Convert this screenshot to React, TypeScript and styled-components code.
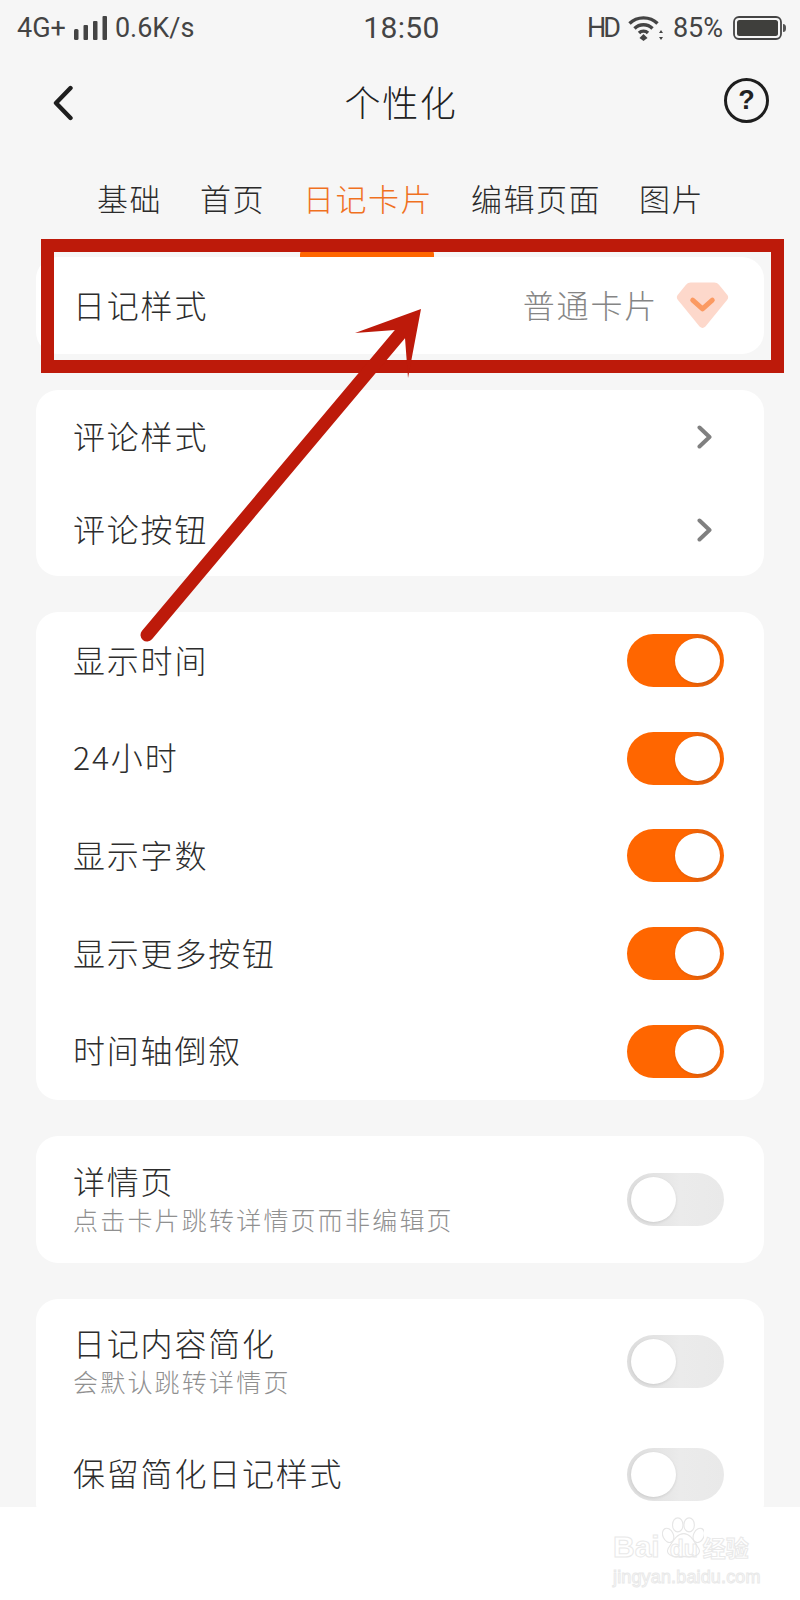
import React from 'react';
import styled, { createGlobalStyle } from 'styled-components';

const GlobalStyle = createGlobalStyle`
  html, body {
    margin: 0;
    padding: 0;
    background: #fff;
    font-family: "Noto Sans CJK SC", "Noto Sans", sans-serif;
  }
`;

const Screen = styled.div`
  position: relative;
  width: 800px;
  height: 1600px;
  overflow: hidden;
  background: #fff;
`;

const Viewport = styled.div`
  height: 1507px;
  overflow: hidden;
  background: #f6f6f6;
`;

const StatusBar = styled.div`
  height: 56px;
  padding: 0 14px 0 17px;
  display: grid;
  grid-template-columns: 1fr auto 1fr;
  align-items: center;
  color: #444;
  font-family: Roboto, "Liberation Sans", sans-serif;
`;

const StatusSide = styled.div<{ $end?: boolean }>`
  display: flex;
  align-items: center;
  justify-content: ${({ $end }) => ($end ? 'flex-end' : 'flex-start')};
`;

const StatusText = styled.span<{ $left?: number; $tight?: boolean }>`
  font-size: 27px;
  font-weight: 400;
  letter-spacing: ${({ $tight }) => ($tight ? '-3px' : '0')};
  margin-left: ${({ $left }) => $left ?? 0}px;
  line-height: 30px;
`;

const Clock = styled.span`
  font-size: 30px;
  letter-spacing: 0.4px;
  margin-bottom: 2px;
  color: #444;
`;

const NavBar = styled.div`
  height: 92px;
  padding: 0 31px 3px 52px;
  box-sizing: border-box;
  display: flex;
  align-items: center;
  justify-content: space-between;
`;

const BackIcon = styled.svg`
  margin-top: 4px;
`;

const NavTitle = styled.h1`
  margin: 0 0 0 4px;
  font-size: 36px;
  font-weight: 300;
  letter-spacing: 1.6px;
  color: #222;
`;

const HelpButton = styled.div`
  width: 45px;
  height: 45px;
  box-sizing: border-box;
  border: 3px solid #1e1e1e;
  border-radius: 50%;
  display: flex;
  align-items: center;
  justify-content: center;
  font: 700 27px "Liberation Sans", sans-serif;
  color: #222;
`;

const Tabs = styled.div`
  height: 109px;
  padding: 0 0 9px 97px;
  box-sizing: border-box;
  display: flex;
  align-items: center;
  gap: 38px;
`;

const Tab = styled.div<{ $active?: boolean }>`
  position: relative;
  font-size: 31px;
  font-weight: 300;
  line-height: 44px;
  letter-spacing: 1.5px;
  white-space: nowrap;
  color: ${({ $active }) => ($active ? '#f0711f' : '#2b2b2b')};
`;

const TabMark = styled.div`
  position: absolute;
  left: -3px;
  right: -1px;
  bottom: -37px;
  height: 8px;
  border-radius: 5px 5px 0 0;
  background: #ff6600;
`;

const Cards = styled.div`
  padding: 0 36px;
  display: flex;
  flex-direction: column;
  gap: 36px;
`;

const Card = styled.section<{ $height?: number }>`
  background: #fff;
  border-radius: 22px;
  ${({ $height }) => ($height ? `height: ${$height}px;` : '')}
  flex: none;
`;

const Row = styled.div<{ $height: number }>`
  height: ${({ $height }) => $height}px;
  padding: 0 40px 0 37px;
  display: flex;
  align-items: center;
  justify-content: space-between;
`;

const Label = styled.div`
  font-size: 32px;
  font-weight: 300;
  letter-spacing: 1.8px;
  line-height: 40px;
  color: #2d2d2d;
`;

const RowLabel = styled(Label)`
  margin-bottom: 4px;
`;

const Hint = styled.div`
  font-size: 25px;
  font-weight: 300;
  letter-spacing: 2.2px;
  line-height: 39px;
  color: #909090;
`;

const Value = styled.div`
  display: flex;
  align-items: center;
  gap: 18px;
  margin-right: -5px;
  font-size: 32px;
  font-weight: 300;
  letter-spacing: 1.8px;
  color: #858585;
`;

const ValueText = styled.span`
  margin-bottom: 4px;
`;

const ChevronIcon = styled.svg`
  margin-right: 11px;
`;

const Track = styled.div<{ $on?: boolean }>`
  width: 97px;
  height: 53px;
  padding: 4px;
  box-sizing: border-box;
  border-radius: 27px;
  display: flex;
  justify-content: ${({ $on }) => ($on ? 'flex-end' : 'flex-start')};
  background: ${({ $on }) =>
    $on
      ? 'linear-gradient(90deg, #ff6600 62%, #e0600f 82%, #ff6600 100%)'
      : 'linear-gradient(90deg, #dedede 8%, #ebebeb 55%, #e9e9e9 100%)'};
`;

const Knob = styled.div`
  width: 45px;
  height: 45px;
  border-radius: 50%;
  background: #fff;
  box-shadow: 0 1px 3px rgba(0, 0, 0, 0.1);
`;

const Callout = styled.div`
  position: absolute;
  left: 41px;
  top: 239px;
  width: 743px;
  height: 134px;
  box-sizing: border-box;
  border: 13px solid #bd1a0a;
`;

const Overlay = styled.svg`
  position: absolute;
  left: 0;
  top: 0;
`;

const Watermark = styled.div`
  position: absolute;
  left: 613px;
  top: 1515px;
  width: 145px;
  height: 70px;
  color: #fff;
  -webkit-text-stroke: 1px #e9e9e9;
`;

const MarkBrand = styled.div`
  position: absolute;
  left: 0;
  top: 15px;
  display: flex;
  align-items: baseline;
  font: 700 30px/34px "Liberation Sans", sans-serif;
  white-space: nowrap;
`;

const MarkDu = styled.span`
  font-size: 23px;
  margin: 0 5px 0 10px;
`;

const MarkCjk = styled.span`
  font: 700 23px/34px "Noto Sans CJK SC", sans-serif;
`;

const MarkSite = styled.div`
  position: absolute;
  left: 0;
  top: 51px;
  font: 400 18px/22px "Liberation Sans", sans-serif;
  letter-spacing: 0.15px;
  white-space: nowrap;
`;

const MarkPaw = styled.svg`
  position: absolute;
  left: 49px;
  top: 0;
`;

const Toggle = ({ on }: { on?: boolean }) => (
  <Track $on={on}>
    <Knob />
  </Track>
);

const Chevron = () => (
  <ChevronIcon width="16" height="24" viewBox="0 0 16 24">
    <path d="M2.5 2.5 L12.5 12 L2.5 21.5" fill="none" stroke="#808080" strokeWidth="4" strokeLinecap="round" strokeLinejoin="round" />
  </ChevronIcon>
);

const Signal = () => (
  <svg width="34" height="24" viewBox="0 0 34 24" style={{ marginLeft: 8 }}>
    <rect x="0" y="13" width="4.5" height="11" rx="1.5" fill="#444" />
    <rect x="9.5" y="9" width="4.5" height="15" rx="1" fill="#444" />
    <rect x="19" y="5" width="4.5" height="19" rx="1" fill="#444" />
    <rect x="28.5" y="0" width="4.5" height="24" rx="1" fill="#444" />
  </svg>
);

const Wifi = () => (
  <svg width="35" height="26" viewBox="0 0 35 26" style={{ marginLeft: 10 }}>
    <g fill="none" stroke="#444" strokeWidth="3.4">
      <path d="M1.5 8.5 C9 1 22 1 29.5 8.5" />
      <path d="M6.5 13.5 C11.5 8.5 19.5 8.5 24.5 13.5" />
      <path d="M11 18 C13.5 15.5 17.5 15.5 20 18" />
    </g>
    <path d="M15.5 19 L19.5 23 L15.5 26 L11.5 23 Z" fill="#444" />
    <path d="M33 15 L35 18 H31 Z M33 25 L35 22 H31 Z" fill="#444" />
  </svg>
);

const Battery = () => (
  <svg width="53" height="24" viewBox="0 0 53 24" style={{ marginLeft: 10 }}>
    <rect x="1" y="1" width="47" height="22" rx="5" fill="none" stroke="#444" strokeWidth="1.8" />
    <rect x="4" y="4" width="41" height="16" rx="2.5" fill="#3f3f3c" />
    <path d="M50 8 C52 8 53 9 53 12 C53 15 52 16 50 16 Z" fill="#555" />
  </svg>
);

const Diamond = () => (
  <svg width="53" height="47" viewBox="0 0 54 47">
    <path d="M15 0 H39 Q42 0 44 2.5 L52.5 13 Q54 15.5 52 18 L30 45 Q27 48 24 45 L2 18 Q0 15.5 1.5 13 L10 2.5 Q12 0 15 0 Z" fill="#fdd8cb" />
    <path d="M17 18 L27 27 L37 18" fill="none" stroke="#fb9a62" strokeWidth="5" strokeLinecap="round" strokeLinejoin="round" />
  </svg>
);

const toggles = ['显示时间', '24小时', '显示字数', '显示更多按钮', '时间轴倒叙'];

const App: React.FC = () => (
  <Screen>
    <GlobalStyle />
    <Viewport>
      <StatusBar>
        <StatusSide>
          <StatusText>4G+</StatusText>
          <Signal />
          <StatusText $left={7}>0.6K/s</StatusText>
        </StatusSide>
        <Clock>18:50</Clock>
        <StatusSide $end>
          <StatusText $tight>HD</StatusText>
          <Wifi />
          <StatusText $left={10}>85%</StatusText>
          <Battery />
        </StatusSide>
      </StatusBar>

      <NavBar>
        <BackIcon width="22" height="36" viewBox="0 0 22 36">
          <path d="M18.5 3 L4 18 L18.5 33" fill="none" stroke="#1e1e1e" strokeWidth="4.4" strokeLinecap="round" strokeLinejoin="round" />
        </BackIcon>
        <NavTitle>个性化</NavTitle>
        <HelpButton>?</HelpButton>
      </NavBar>

      <Tabs>
        <Tab>基础</Tab>
        <Tab>首页</Tab>
        <Tab $active>
          日记卡片
          <TabMark />
        </Tab>
        <Tab>编辑页面</Tab>
        <Tab>图片</Tab>
      </Tabs>

      <Cards>
        <Card>
          <Row $height={97}>
            <RowLabel>日记样式</RowLabel>
            <Value>
              <ValueText>普通卡片</ValueText>
              <Diamond />
            </Value>
          </Row>
        </Card>

        <Card>
          <Row $height={93}>
            <RowLabel>评论样式</RowLabel>
            <Chevron />
          </Row>
          <Row $height={93}>
            <RowLabel>评论按钮</RowLabel>
            <Chevron />
          </Row>
        </Card>

        <Card $height={488}>
          {toggles.map((label) => (
            <Row $height={97.6} key={label}>
              <RowLabel>{label}</RowLabel>
              <Toggle on />
            </Row>
          ))}
        </Card>

        <Card>
          <Row $height={127}>
            <div>
              <Label>详情页</Label>
              <Hint>点击卡片跳转详情页而非编辑页</Hint>
            </div>
            <Toggle />
          </Row>
        </Card>

        <Card>
          <Row $height={124}>
            <div>
              <Label>日记内容简化</Label>
              <Hint>会默认跳转详情页</Hint>
            </div>
            <Toggle />
          </Row>
          <Row $height={102}>
            <RowLabel>保留简化日记样式</RowLabel>
            <Toggle />
          </Row>
        </Card>
      </Cards>
    </Viewport>

    <Callout />
    <Overlay width="800" height="1600" viewBox="0 0 800 1600">
      <path d="M147 635 L400 334" fill="none" stroke="#bd1a0a" strokeWidth="13" strokeLinecap="round" />
      <path d="M421 309 L355 333 L395 330 L405 338 L408 378 Z" fill="#bd1a0a" />
    </Overlay>

    <Watermark>
      <MarkBrand>
        Bai<MarkDu>du</MarkDu>
        <MarkCjk>经验</MarkCjk>
      </MarkBrand>
      <MarkPaw width="42" height="46" viewBox="0 0 48 48" fill="none" stroke="#e6e6e6" strokeWidth="1.3">
        <ellipse cx="7" cy="21" rx="6" ry="8.5" transform="rotate(-25 7 21)" />
        <ellipse cx="18" cy="9" rx="6" ry="8" />
        <ellipse cx="31" cy="9" rx="6" ry="8" />
        <ellipse cx="42" cy="21" rx="6" ry="8.5" transform="rotate(25 42 21)" />
        <path d="M25 19 C33 19 37 29 42 36 C46 44 34 47 25 45 C16 47 3 44 7 36 C12 29 16 19 25 19 Z" />
      </MarkPaw>
      <MarkSite>jingyan.baidu.com</MarkSite>
    </Watermark>
  </Screen>
);

export default App;
